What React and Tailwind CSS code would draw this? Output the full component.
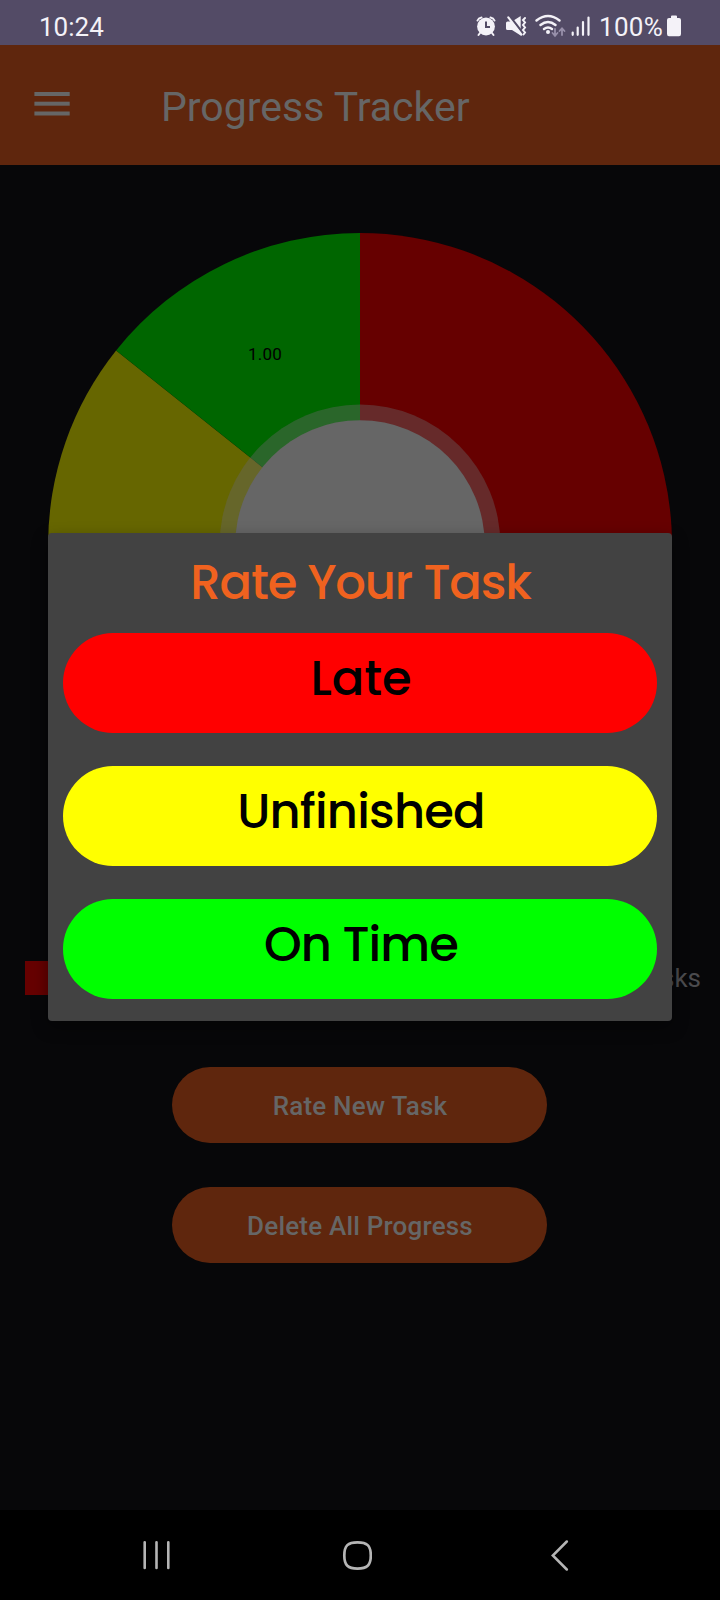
import React from "react";

function StatusBar() {
  return (
    <header className="flex h-[45px] items-start justify-between bg-[#534b66] pl-[39px] pr-[39px] pt-[11px] text-[#f4f2f8]">
      <span className="h-8 text-[26px] leading-8">10:24</span>
      <svg className="-mt-[11px] ml-auto h-[45px] w-[124px] shrink-0" viewBox="470 0 124 45" fill="none" stroke="#f4f2f8" strokeWidth="2" strokeLinecap="round">
        <circle cx="486" cy="26.500" r="8.900" fill="#f4f2f8" stroke="none" />
        <path d="M477.500 20.500 Q478.500 18 481.500 17.500 M494.500 20.500 Q493.500 18 490.500 17.500 M480 33 L478.500 35 M492 33 L493.500 35" />
        <path d="M486 21.500 V27 H490" stroke="#534b66" strokeLinecap="butt" />
        <path d="M507.500 21.500 H512 L520.700 16 V35.500 L512 30 H507.500 Q506 30 506 28.500 V23 Q506 21.500 507.500 21.500 Z" fill="#f4f2f8" stroke="none" />
        <path d="M509.500 16 L523.500 34" stroke="#534b66" strokeWidth="2.400" />
        <path d="M508.300 17.300 L521.300 34.500" strokeWidth="2.200" />
        <path d="M525 18 L523 20 L525 22.500 L523 25 L525 27.500 L523 30 L525 32.500 L523.500 34.500" strokeWidth="2" />
        <path d="M536.500 20.500 Q548 11.500 559.500 20.500 M540.500 25 Q548 19 555.500 25 M544 29 Q548 26 552 29" strokeWidth="2.500" />
        <circle cx="548" cy="32" r="2" fill="#f4f2f8" stroke="none" />
        <path d="M555 29 V35.500 M552.500 33 L555 35.800 L557.500 33 M562 35 V28.500 M559.500 31 L562 28.300 L564.500 31" stroke="#9890aa" strokeWidth="1.800" />
        <path d="M572.700 32.500 V34.800 M577.700 27.500 V34.800 M583 22 V34.800 M588.500 17.500 V34.800" strokeWidth="2.200" />
      </svg>
      <span className="ml-[5px] h-8 w-[64px] whitespace-nowrap text-[26px] leading-8 tracking-[0.3px]">100%</span>
      <svg className="ml-[4px] mt-[4px] h-[22px] w-[14px] shrink-0" viewBox="0 0 14 22" fill="#f4f2f8">
        <path d="M4 1.500 Q4 .5 5 .5 H9 Q10 .5 10 1.500 V3 H12 Q14 3 14 5 V19 Q14 21.300 12 21.300 H2 Q0 21.300 0 19 V5 Q0 3 2 3 H4 Z" />
      </svg>
    </header>
  );
}

function AppBar() {
  return (
    <div className="flex h-[120px] items-center bg-[#5f260d] text-[#666666]">
      <svg className="-mt-[3px] ml-[34px] h-6 w-9" viewBox="0 0 36 24" fill="#666666">
        <rect x=".4" y="0" width="35.300" height="4" />
        <rect x=".4" y="9.700" width="35.300" height="4" />
        <rect x=".4" y="19.500" width="35.300" height="4" />
      </svg>
      <h1 className="ml-[91px] mt-[3px] whitespace-nowrap text-[41px] leading-[48px]">Progress Tracker</h1>
    </div>
  );
}

function ProgressChart() {
  return (
    <svg className="mt-[68px] h-[624px] w-full shrink-0" viewBox="48 233 624 624">
      <path d="M360 545 L360 233 A312 312 0 0 1 495.400 826.100 Z" fill="#660000" />
      <path d="M360 545 L495.400 826.100 A312 312 0 0 1 116.100 350.500 Z" fill="#666600" />
      <path d="M360 545 L116.100 350.500 A312 312 0 0 1 360 233 Z" fill="#006600" />
      <circle cx="360" cy="545" r="140.400" fill="#666666" fillOpacity=".41" />
      <circle cx="360" cy="545" r="124.800" fill="#666666" />
      <text x="265" y="360" textAnchor="middle" fontSize="17" letterSpacing=".2" fill="#000">1.00</text>
    </svg>
  );
}

function Legend() {
  return (
    <div className="mt-[103px] flex h-[35px] items-center justify-between pl-[25px] pr-[19px] text-[26px] text-[#4b4b4e]">
      <span className="h-[34px] w-[33px] bg-[#660000]" />
      <span className="leading-8">Tasks</span>
    </div>
  );
}

function ActionButton({ children }) {
  return (
    <button className="h-[76px] w-[375px] rounded-full bg-[#5f260d] pl-[1px] pt-[2px] text-[26px] font-medium leading-8 tracking-[0.2px] text-[#666666]">
      {children}
    </button>
  );
}

const ratings = [
  { label: "Late", style: "bg-[#ff0000] tracking-[-0.1px]" },
  { label: "Unfinished", style: "bg-[#ffff00] tracking-[-0.8px]" },
  { label: "On Time", style: "bg-[#00ff00] tracking-[-0.95px]" },
];

function RatingDialog() {
  return (
    <div role="dialog" className="absolute left-[48px] top-[533px] flex h-[488px] w-[624px] flex-col rounded-[4px] bg-[#424242] px-[15px] shadow-[0_6px_16px_rgba(0,0,0,0.4)] font-[Poppins,Inter,sans-serif]">
      <h2 className="flex h-[100px] items-center justify-center whitespace-nowrap pl-[1px] text-[48px] font-medium tracking-[-1.15px] text-[#f0621f]">Rate Your Task</h2>
      <div className="flex flex-col gap-[33px]">
        {ratings.map((r) => (
          <button key={r.label} className={`flex h-[100px] items-center justify-center rounded-full pb-[8px] pl-[2px] text-[48px] font-medium text-black ${r.style}`}>
            {r.label}
          </button>
        ))}
      </div>
    </div>
  );
}

function NavBar() {
  return (
    <nav className="flex h-[90px] items-center bg-black pl-[142px]">
      <svg className="h-[30px] w-[30px]" viewBox="0 0 30 30" stroke="#b5b5b5" strokeWidth="2.600" strokeLinecap="round">
        <path d="M2.700 2.300 V28 M14.500 2.300 V28 M26.300 2.300 V28" />
      </svg>
      <svg className="ml-[170px] h-[30px] w-[30px]" viewBox="0 0 30 30" fill="none" stroke="#b5b5b5" strokeWidth="2.700">
        <path d="M15.500 2.300 C25 2.300 28.800 5.500 28.800 15.500 C28.800 25.500 25 28.600 15.500 28.600 C6 28.600 2.300 25.500 2.300 15.500 C2.300 5.500 6 2.300 15.500 2.300 Z" />
      </svg>
      <svg className="ml-[178px] h-[32px] w-[20px]" viewBox="0 0 20 32" fill="none" stroke="#b5b5b5" strokeWidth="2.500" strokeLinecap="round">
        <path d="M16.800 2.500 L2.800 16.500 L16.800 30.500" />
      </svg>
    </nav>
  );
}

export default function App() {
  return (
    <div className="relative flex h-[1600px] w-[720px] flex-col overflow-hidden bg-[#070709] font-[Roboto,sans-serif]">
      <StatusBar />
      <AppBar />
      <main className="flex flex-1 flex-col">
        <ProgressChart />
        <Legend />
        <div className="mt-[72px] flex flex-col items-start gap-[44px] pl-[172px]">
          <ActionButton>Rate New Task</ActionButton>
          <ActionButton>Delete All Progress</ActionButton>
        </div>
      </main>
      <NavBar />
      <RatingDialog />
    </div>
  );
}
